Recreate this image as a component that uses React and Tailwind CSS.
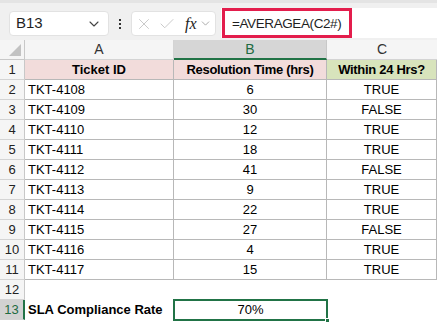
import { ChevronDown, X, Check } from 'lucide-react';

const rows = [
  ['TKT-4108', '6', 'TRUE'],
  ['TKT-4109', '30', 'FALSE'],
  ['TKT-4110', '12', 'TRUE'],
  ['TKT-4111', '18', 'TRUE'],
  ['TKT-4112', '41', 'FALSE'],
  ['TKT-4113', '9', 'TRUE'],
  ['TKT-4114', '22', 'TRUE'],
  ['TKT-4115', '27', 'FALSE'],
  ['TKT-4116', '4', 'TRUE'],
  ['TKT-4117', '15', 'TRUE'],
];

const cellFont = { fontFamily: '"Liberation Sans", Arial, sans-serif' };

const RowHead = ({ n, active }) => (
  <div
    className={`h-5 flex items-center justify-center text-[13px] border-b border-[#d4d4d4] ${
      active ? 'bg-[#d2d2d2] text-[#1e6b41] border-r-2 border-r-[#217346]' : 'bg-[#f5f5f5] text-[#222] border-r border-r-[#c8c8c8]'
    }`}
  >
    {n}
  </div>
);

export default function App() {
  return (
    <div className="w-[437px] h-[324px] overflow-hidden bg-white" style={cellFont}>
      {/* Formula bar */}
      <div className="h-10 bg-[#f0f0f0] border-t-[3px] border-[#e4e4e4] flex items-start pt-[5px]">
        <div className="ml-[9px] mt-[3px] w-[100px] h-[25px] bg-white rounded-[4px] border border-[#e2e2e2] flex items-center pl-[6px] pr-[6px]">
          <span className="text-[15px] text-[#1f1f1f] flex-1">B13</span>
          <ChevronDown className="w-4 h-4 text-[#444]" strokeWidth={1.6} />
        </div>
        <div className="w-[22px] mt-[3px] h-[25px] flex flex-col items-center justify-center gap-[2px]">
          <span className="w-[2px] h-[2px] bg-[#333]" />
          <span className="w-[2px] h-[2px] bg-[#333]" />
          <span className="w-[2px] h-[2px] bg-[#333]" />
        </div>
        <div className="mt-[3px] w-[85px] h-[25px] bg-white rounded-[4px] border border-[#e2e2e2] flex items-center pl-[3px]">
          <X className="w-[18px] h-[18px] text-[#c4c4c4]" strokeWidth={1.2} />
          <Check className="w-[18px] h-[18px] text-[#c4c4c4] ml-[5px]" strokeWidth={1.2} />
          <span
            className="ml-[9px] text-[16px] italic text-[#222]"
            style={{ fontFamily: '"Liberation Serif", "Times New Roman", serif' }}
          >
            fx
          </span>
          <ChevronDown className="w-[13px] h-[13px] text-[#999] ml-[2px]" strokeWidth={1.5} />
        </div>
        <div className="ml-[5px] flex-1 h-[30px] bg-white relative">
          <div className="absolute left-[1px] top-0 w-[130px] h-[30px] border-[3px] border-[#e31d4c]" />
          <span className="absolute left-[11px] top-[6px] text-[13.5px] text-[#1f1f1f] tracking-[-0.4px]">
            =AVERAGEA(C2#)
          </span>
        </div>
      </div>

      {/* Grid */}
      <div className="grid grid-cols-[25px_149px_153px_110px]">
        {/* column headers */}
        <div className="h-5 bg-[#f5f5f5] border-r border-b border-[#c8c8c8] relative">
          <div
            className="absolute right-[3px] bottom-[3px] w-[12px] h-[12px] bg-[#c2c2c2]"
            style={{ clipPath: 'polygon(100% 0, 100% 100%, 0 100%)' }}
          />
        </div>
        <div className="h-5 bg-[#f5f5f5] border-r border-b border-[#d4d4d4] flex items-center justify-center text-[14px] text-[#333]">A</div>
        <div className="h-5 bg-[#d6d6d6] border-r border-[#c8c8c8] border-b-2 border-b-[#217346] flex items-center justify-center text-[14px] text-[#1e6b41]">B</div>
        <div className="h-5 bg-[#f5f5f5] border-b border-[#d4d4d4] flex items-center justify-center text-[14px] text-[#333]">C</div>

        {/* row 1 */}
        <RowHead n={1} />
        <div className="h-5 bg-[#f2dcdb] border-r border-b border-[#b8b8b8] flex items-center justify-center text-[13px] font-bold text-black">Ticket ID</div>
        <div className="h-5 bg-[#f2dcdb] border-r border-b border-[#b8b8b8] flex items-center justify-center text-[13px] font-bold text-black tracking-[-0.3px]">Resolution Time (hrs)</div>
        <div className="h-5 bg-[#d8e4bc] border-r border-b border-[#b8b8b8] flex items-center justify-center text-[13px] font-bold text-black tracking-[-0.3px]">Within 24 Hrs?</div>

        {rows.map((r, i) => (
          <div key={r[0]} className="contents">
            <RowHead n={i + 2} />
            <div className="h-5 border-r border-b border-[#b8b8b8] flex items-center pl-[3px] text-[13px] text-black">{r[0]}</div>
            <div className="h-5 border-r border-b border-[#b8b8b8] flex items-center justify-center text-[13px] text-black">{r[1]}</div>
            <div className="h-5 border-r border-b border-[#b8b8b8] flex items-center justify-center text-[13px] text-black">{r[2]}</div>
          </div>
        ))}

        {/* row 12 */}
        <RowHead n={12} />
        <div className="h-5" />
        <div className="h-5" />
        <div className="h-5" />

        {/* row 13 */}
        <RowHead n={13} active />
        <div className="h-5 flex items-center pl-[3px] text-[13px] font-bold text-black">SLA Compliance Rate</div>
        <div className="h-5 relative flex items-center justify-center text-[13px] text-black">
          <div className="absolute -left-[1px] -top-[1px] -right-[1px] -bottom-[1px] border-2 border-[#217346]" />
          <div className="absolute -right-[3px] -bottom-[3px] w-[5px] h-[5px] bg-[#217346] border border-white" />
          <span className="relative">70%</span>
        </div>
        <div className="h-5" />
      </div>
    </div>
  );
}
